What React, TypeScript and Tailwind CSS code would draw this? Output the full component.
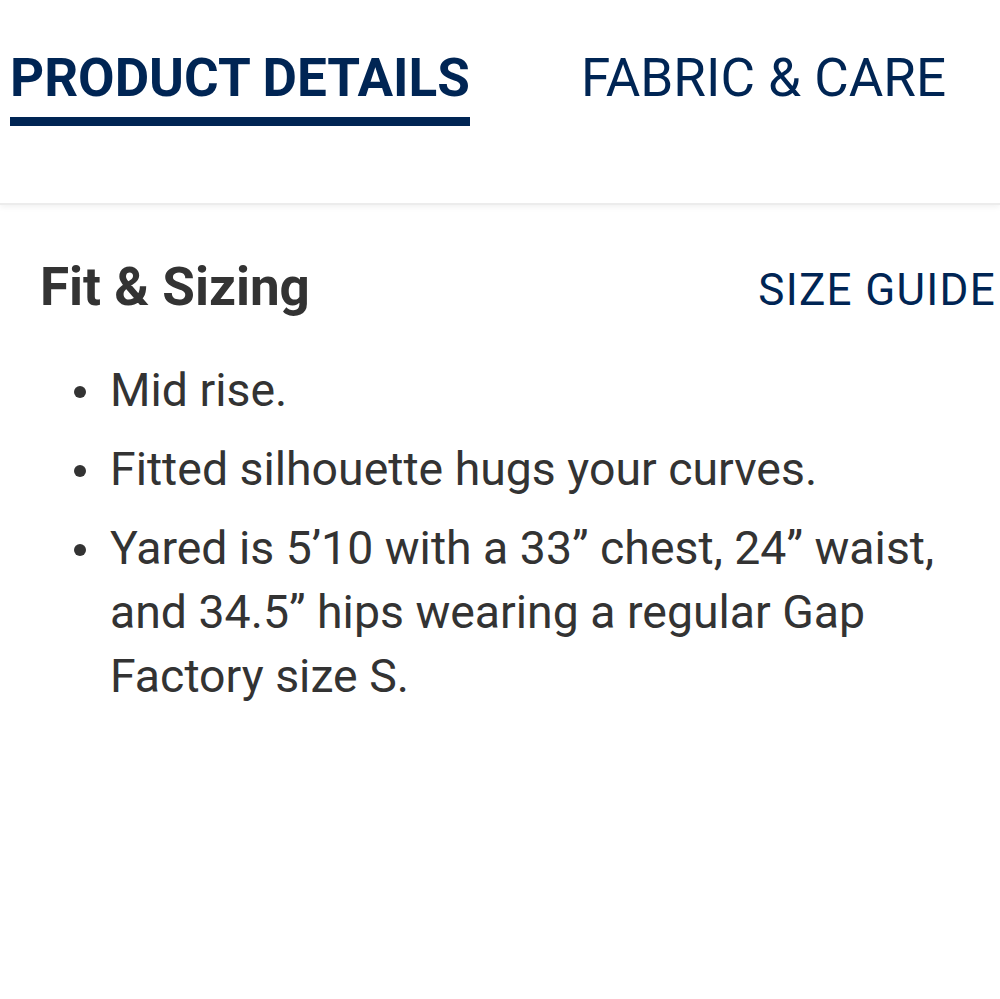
function Bullet({ children }: { children: React.ReactNode }) {
  return (
    <li className="flex">
      <span className="flex h-[64px] w-[70px] shrink-0 items-center justify-start pl-[34px]">
        <span className="mt-[4px] block h-[12px] w-[12px] rounded-full bg-[#333333]" />
      </span>
      <span>{children}</span>
    </li>
  );
}

export default function App() {
  return (
    <div className="min-h-[999px] bg-white font-['Roboto',sans-serif]">
      <div className="h-[205px] border-b-2 border-[#ececec] shadow-[0_2px_6px_rgba(0,0,0,0.06)]">
        <div className="flex gap-[111px] pl-[10px] pt-[52px]">
          <div className="flex flex-col">
            <span className="text-[53px] font-bold leading-[53px] text-[#002554]">PRODUCT DETAILS</span>
            <span className="mt-[12px] h-[9px] bg-[#002554]" />
          </div>
          <span className="text-[53px] leading-[53px] text-[#002554]">FABRIC &amp; CARE</span>
        </div>
      </div>
      <div className="pl-[40px] pr-[4px] pt-[56px]">
        <div className="flex items-baseline justify-between">
          <h2 className="text-[53px] font-bold leading-[53px] text-[#333333]">Fit &amp; Sizing</h2>
          <span className="text-[44px] leading-[44px] tracking-[1.3px] text-[#002554]">SIZE GUIDE</span>
        </div>
        <ul className="mt-[44px] flex flex-col gap-[15px] pr-[46px] text-[46.4px] leading-[64px] text-[#333333]">
          <Bullet>Mid rise.</Bullet>
          <Bullet>Fitted silhouette hugs your curves.</Bullet>
          <Bullet>Yared is 5’10 with a 33” chest, 24” waist, and 34.5” hips wearing a regular Gap Factory size S.</Bullet>
        </ul>
      </div>
    </div>
  );
}
